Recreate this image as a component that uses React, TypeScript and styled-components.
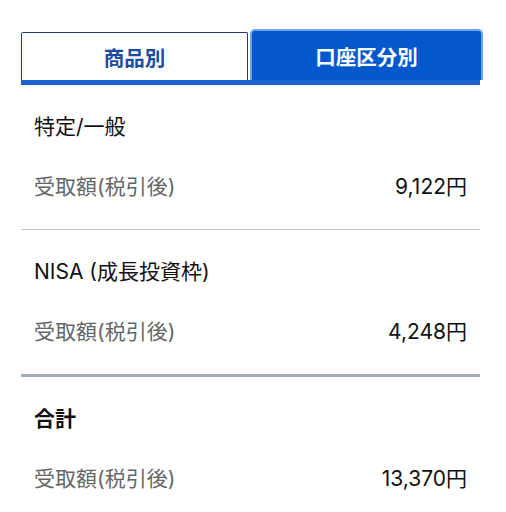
import React from 'react'
import styled, { createGlobalStyle } from 'styled-components'

const GlobalStyle = createGlobalStyle`
  body {
    margin: 0;
    background: #ffffff;
    font-family: Inter, "Noto Sans CJK JP", "Noto Sans", sans-serif;
  }
`

interface AccountRow {
  title: string
  amount: string
  bold?: boolean
}

const rows: AccountRow[] = [
  { title: '特定/一般', amount: '9,122円' },
  { title: 'NISA (成長投資枠)', amount: '4,248円' },
  { title: '合計', amount: '13,370円', bold: true },
]

export default function App() {
  return (
    <Page>
      <GlobalStyle />
      <Tabs>
        <Tab>商品別</Tab>
        <Tab active>口座区分別</Tab>
      </Tabs>
      {rows.map((row, i) => (
        <Section key={row.title} divider={i === 0 ? 'light' : i === 1 ? 'strong' : 'none'}>
          <Title bold={row.bold}>{row.title}</Title>
          <Line>
            <Label>受取額(税引後)</Label>
            <Amount>{row.amount}</Amount>
          </Line>
        </Section>
      ))}
    </Page>
  )
}

const Page = styled.div`
  width: 459px;
  margin: 0 21px;
  padding-top: 29px;
`

const Tabs = styled.div`
  display: flex;
  align-items: flex-end;
  gap: 2px;
  height: 51px;
  border-bottom: 5px solid #1d61cf;
`

const Tab = styled.div<{ active?: boolean }>`
  box-sizing: border-box;
  display: flex;
  align-items: center;
  justify-content: center;
  font-family: "Noto Sans CJK JP", sans-serif;
  font-size: 20.5px;
  font-weight: 700;
  ${({ active }) =>
    active
      ? `
    width: 233px;
    height: 51px;
    margin-right: -3px;
    background: #0358cd;
    color: #ffffff;
    border: 2px solid #6aa5f1;
    border-bottom: none;
    border-radius: 5px 5px 0 0;
  `
      : `
    width: 227px;
    height: 48px;
    background: #ffffff;
    color: #1b4d9e;
    border: 1.5px solid #1d3c8c;
    border-bottom: none;
    border-radius: 2px 2px 0 0;
  `}
`

const Section = styled.div<{ divider: 'light' | 'strong' | 'none' }>`
  display: flex;
  flex-direction: column;
  gap: 32px;
  padding: 28px 13px 28px;
  border-bottom: ${({ divider }) =>
    divider === 'light' ? '1.5px solid #c6c6c6' : divider === 'strong' ? '3px solid #a5abba' : 'none'};
`

const Title = styled.div<{ bold?: boolean }>`
  font-size: 21px;
  line-height: 28px;
  color: #111111;
  font-weight: ${({ bold }) => (bold ? 700 : 400)};
`

const Line = styled.div`
  display: flex;
  justify-content: space-between;
  align-items: center;
  line-height: 28px;
`

const Label = styled.span`
  font-size: 21px;
  color: #666666;
`

const Amount = styled.span`
  font-size: 21px;
  color: #111111;
`
